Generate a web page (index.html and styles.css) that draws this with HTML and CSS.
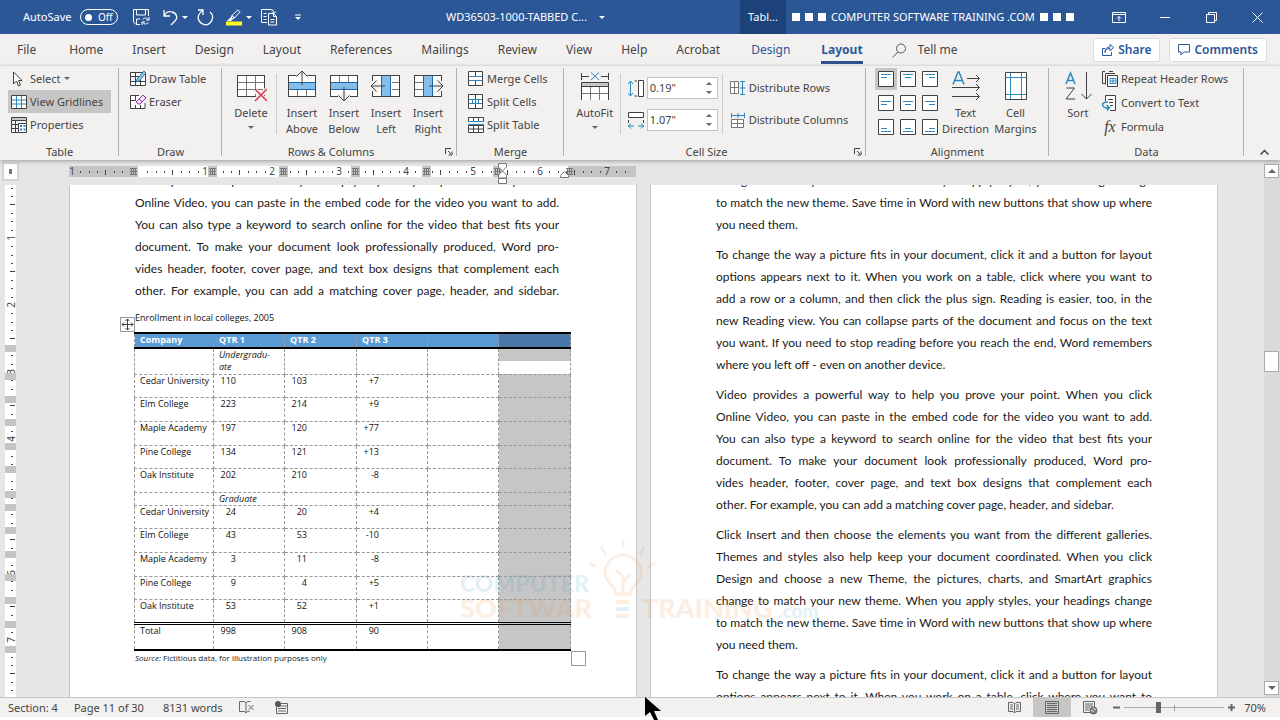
FILE: index.html
```html
<!DOCTYPE html>
<html lang="en">
<head>
<meta charset="utf-8">
<title>WD36503-1000-TABBED C...</title>
<link rel="stylesheet" href="styles.css">
</head>
<body>
<div class="app">
  <header class="titlebar">
    <div class="quick">
      <span class="autosave" id="as">AutoSave</span>
      <button class="toggle" aria-labelledby="as"><i></i>Off</button>
      <button class="qbtn save" aria-label="Save"><svg width="17" height="17" viewBox="0 0 17 17"><path d="M7 15.500H3L.5 13V.5h15V7M3.500 1v5h9V1M3.500 15v-5H7M16 8v3h-3M9 16v-3h3M9.500 10.500c1.500-2 4.500-2 6 .3M15.500 13.500c-1.500 2-4.500 2-6-.3"/></svg></button>
      <button class="qbtn undo" aria-label="Undo"><svg width="15" height="17" viewBox="0 0 15 17"><path stroke-width="1.300" d="M1 1v6h6M1 7c2-4 5-5 8-4 5 1 6 6 3 9l-4 4"/></svg><b class="caret"></b></button>
      <button class="qbtn redo" aria-label="Repeat"><svg width="17" height="17" viewBox="0 0 17 17"><path stroke-width="1.300" d="M1 1h5v5M6 1.500C1 4 0 9 2.500 12.500S10 17 13 14s4-8 0-11"/></svg></button>
      <button class="qbtn pen" aria-label="Highlight"><svg width="16" height="17" viewBox="0 0 16 17"><path d="M6 6.500 12 .8l2 2L8.500 9zM6 6.500 8.500 9 6 10l-1-1z"/><path class="wf" d="M5 8l2 2-2 2H1z"/><path class="yl" d="M0 12.500h16v4H0z"/></svg><b class="caret"></b></button>
      <button class="qbtn docs" aria-label="Compare"><svg width="17" height="17" viewBox="0 0 17 17"><path d="M6 13.500H.5V.5h9M7.500 4.500h5l3 3v8.500h-8zM12.500 4.500v3h3M2.500 4.500h3M2.500 7.500h3M2.500 10.500h3M9.500 10.500h4M9.500 13h4M9 .5c3 0 4 1 4 3.500M11 2.500l2 2 2-2"/></svg></button>
      <button class="qbtn more" aria-label="Customize"><svg width="7" height="7" viewBox="0 0 7 7"><path d="M0 1h6"/><path class="wf" d="M0 3h6L3 6z"/></svg></button>
    </div>
    <div class="doctitle">WD36503-1000-TABBED C... <b class="caret"></b></div>
    <div class="ctx">Tabl...</div>
    <div class="org"><span class="sq"><i></i><i></i><i></i></span><span>COMPUTER SOFTWARE TRAINING .COM</span><span class="sq"><i></i><i></i><i></i></span></div>
    <button class="win" aria-label="Ribbon display"><svg width="14" height="11" viewBox="0 0 14 11"><path d="M.5.5h13v10H.5zM.5 2.500h13M7 9V4.500M5 6.500l2-2 2 2"/></svg></button>
    <button class="win" aria-label="Minimize"><svg width="11" height="11" viewBox="0 0 11 11"><path d="M0 5.500h10"/></svg></button>
    <button class="win" aria-label="Restore"><svg width="11" height="11" viewBox="0 0 11 11"><path d="M.5 2.500h8v8h-8zM2.500 2.500v-2h8v8h-2"/></svg></button>
    <button class="win" aria-label="Close"><svg width="11" height="11" viewBox="0 0 11 11"><path d="M.5.5l10 10M10.500.5l-10 10"/></svg></button>
  </header>

  <nav class="tabs">
    <a href="#" class="file">File</a><a href="#">Home</a><a href="#">Insert</a><a href="#">Design</a><a href="#">Layout</a><a href="#">References</a><a href="#">Mailings</a><a href="#">Review</a><a href="#">View</a><a href="#">Help</a><a href="#">Acrobat</a><a href="#" class="blue">Design</a><a href="#" class="blue on">Layout</a>
    <button class="tell"><svg width="15" height="15" viewBox="0 0 15 15"><circle cx="9" cy="5.500" r="4.500"/><path d="M6 9 .5 14.500"/></svg>Tell me</button>
    <span class="grow"></span>
    <button class="pill"><svg width="12" height="12" viewBox="0 0 12 12"><path d="M3 4.500H.5v7h9V8M3 8.500c0-3 2-4 5-4V7l3.500-3.500L8 .5V3C4.500 3 3 5 3 8.500z"/></svg>Share</button>
    <button class="pill"><svg width="12" height="12" viewBox="0 0 12 12"><path d="M.5.5h11v7.500H6L3 11V8H.5z"/></svg>Comments</button>
  </nav>

  <section class="ribbon">
    <div class="group">
      <div class="gbody pad">
        <div class="stack">
          <button class="sm"><svg width="16" height="16" viewBox="0 0 16 16"><path class="w" d="M2.500 1v12l3-3 2 5 2-1-2-4.500H11z"/></svg>Select<b class="caret"></b></button>
          <button class="sm pressed"><svg width="16" height="16" viewBox="0 0 16 16"><path class="w" d="M.5 1.500h15v13H.5z"/><path class="b" d="M5.500 2v12M10.500 2v12M1 6h14M1 10h14"/></svg>View Gridlines</button>
          <button class="sm"><svg width="16" height="16" viewBox="0 0 16 16"><path class="g" d="M.5.5h15v3H.5z"/><path d="M.5.5h15v3H.5zM.5 3.500v12H7M15.500 3.500V6M4.500 4v11M.5 7.500H7M.5 11.500H7"/><path class="w" d="M7.500 6.500h8v9h-8z"/><path class="b" d="M9 9h2M9 12.500h2M12.500 9h2M12.500 12.500h2" stroke-width="2"/></svg>Properties</button>
        </div>
      </div>
      <div class="glabel">Table</div>
    </div>
    <div class="group">
      <div class="gbody pad">
        <div class="stack">
          <button class="sm"><svg width="16" height="16" viewBox="0 0 16 16"><path class="w" d="M.5 1.500h15v13H.5z"/><path d="M5.500 2v12M10.500 8v6M1 5.500h8M1 10.500h14"/><path class="lb" d="M14 0l2 2-7 8-3 1 1-3z"/></svg>Draw Table</button>
          <button class="sm"><svg width="16" height="16" viewBox="0 0 16 16"><path class="w" d="M15 9v5.500H.5v-13H9M5.500 2v4.500H1M5.500 11v3M10.500 11v3"/><path class="pu" d="M7 7l6-6 3 3-6 6H8L6 8zM9 5l3.500 3"/></svg>Eraser</button>
        </div>
      </div>
      <div class="glabel">Draw</div>
    </div>
    <div class="group">
      <div class="gbody mid">
        <button class="lg"><svg width="32" height="32" viewBox="0 0 32 32"><path class="w" d="M2.500 5.500h27v21h-27z"/><path class="gr" d="M11.500 6v20M20.500 6v20M3 12.500h26M3 19.500h26"/><path d="M2.500 5.500h27v21h-27z"/><path class="halo" d="M20 20l11 11M31 20L20 31"/><path class="rd" d="M20 19l12 12M32 19L20 31"/></svg><span>Delete</span><b class="caret"></b></button>
        <i class="vr"></i>
        <button class="lg"><svg width="32" height="32" viewBox="0 0 32 32"><path class="w" d="M2.500 5.500h27v21h-27z"/><path class="gr" d="M11.500 20v6M20.500 20v6"/><path class="halo" d="M16 6V1l-5 5M16 1l5 5"/><path class="sky" d="M2.500 12.500h27v7h-27z"/><path d="M2.500 5.500v21h27v-21M2.500 5.500H7M25 5.500h4.500M16 15V1M10.500 6.500L16 1l5.500 5.500"/></svg><span>Insert<br>Above</span></button>
        <button class="lg"><svg width="32" height="32" viewBox="0 0 32 32"><path class="w" d="M2.500 5.500h27v21h-27z"/><path class="gr" d="M11.500 6v6M20.500 6v6"/><path class="halo" d="M16 22v9l-6-6M16 31l6-6"/><path class="sky" d="M2.500 12.500h27v7h-27z"/><path d="M10 26.500H2.500v-21h27v21H22M16 17v14M10.500 25.500L16 31l5.500-5.500"/></svg><span>Insert<br>Below</span></button>
        <button class="lg"><svg width="32" height="32" viewBox="0 0 32 32"><path class="w" d="M2.500 5.500h27v21h-27z"/><path class="gr" d="M22 12.500h7M22 19.500h7"/><path class="halo" d="M10 16H1l6-6M1 16l6 6"/><path class="sky" d="M11.500 5.500h9v21h-9z"/><path d="M2.500 10V5.500h27v21h-27V22M15 16H1M6.500 10.500L1 16l5.500 5.500"/></svg><span>Insert<br>Left</span></button>
        <button class="lg"><svg width="32" height="32" viewBox="0 0 32 32"><path class="w" d="M2.500 5.500h27v21h-27z"/><path class="gr" d="M3 12.500h8M3 19.500h8"/><path class="halo" d="M22 16h9l-6-6M31 16l-6 6"/><path class="sky" d="M11.500 5.500h9v21h-9z"/><path d="M29.500 10V5.500h-27v21h27V22M17 16h14M25.500 10.500L31 16l-5.500 5.500"/></svg><span>Insert<br>Right</span></button>
      </div>
      <div class="glabel withlaunch">Rows &amp; Columns</div>
      <button class="launch" aria-label="Table options"><svg width="8" height="8" viewBox="0 0 8 8"><path d="M.5 6V.5H6M3 3l3 3M7 3.500V7H3.500"/></svg></button>
    </div>
    <div class="group">
      <div class="gbody pad">
        <div class="stack">
          <button class="sm"><svg width="16" height="16" viewBox="0 0 16 16"><path class="w" d="M.5.5h14v14H.5z"/><path d="M7.500 1v4M7.500 10v4"/><path class="b" d="M1 5.500h13M1 9.500h13"/></svg>Merge Cells</button>
          <button class="sm"><svg width="16" height="16" viewBox="0 0 16 16"><path class="w" d="M.5.5h14v14H.5z"/><path d="M7.500 1v4M7.500 10v4"/><path class="b" d="M1 5.500h13M1 9.500h13M4.500 5v5M7.500 5v5M10.500 5v5"/></svg>Split Cells</button>
          <button class="sm"><svg width="16" height="16" viewBox="0 0 16 16"><path class="w" d="M.5 4V.5h15V4M5.500 1v3M10.500 1v3M.5 8.500h15v7H.5zM5.500 9v6M10.500 9v6M1 12h14"/><path class="b" d="M0 4.500h16M0 7.500h16"/></svg>Split Table</button>
        </div>
      </div>
      <div class="glabel">Merge</div>
    </div>
    <div class="group">
      <div class="gbody mid shift">
        <button class="lg"><svg width="32" height="32" viewBox="0 0 32 32"><path d="M2.500 3v7M29.500 3v7M3 6.500h7M22 6.500h7"/><path class="b" d="M12 2.500l8 7.500M20 2.500L12 10"/><path class="wn" d="M2.500 12.500h27V30h-27z"/><path class="g" d="M3 13h26v3H3z"/><path d="M2.500 30V12.500h27V30M3 16.500h26"/><path class="gr" d="M11.500 17v13M20.500 17v13M3 23.500h26"/></svg><span>AutoFit</span><b class="caret"></b></button>
        <i class="vr"></i>
        <div class="sizes">
          <div class="size"><svg width="16" height="17" viewBox="0 0 16 17"><path class="b" d="M2.500 1v15M0 4l2.500-3L5 4M0 13l2.500 3L5 13"/><path d="M6.500 1H9M6.500 16H9"/><path class="w" d="M10.500.5h5v16h-5z"/></svg><span class="spin"><input type="text" value="0.19&quot;" aria-label="Height"><span><button aria-label="Height up"></button><button class="dn" aria-label="Height down"></button></span></span></div>
          <div class="size"><svg width="16" height="17" viewBox="0 0 16 17"><path class="w" d="M.5.5h15v5H.5z"/><path d="M.5 8v3M15.500 8v3"/><path class="b" d="M0 14h6M10 14h6M3 11.500L.5 14 3 16.500M13 11.500l2.500 2.500-2.500 2.500"/></svg><span class="spin"><input type="text" value="1.07&quot;" aria-label="Width"><span><button aria-label="Width up"></button><button class="dn" aria-label="Width down"></button></span></span></div>
        </div>
        <i class="vr"></i>
        <div class="sizes">
          <button class="sm"><svg width="16" height="16" viewBox="0 0 16 16"><path class="w gr" d="M.5 1.500h8v12h-8zM1 7.500h7M4.500 2v11"/><path class="b" d="M12.500 1v14M10 1.500h5M10 8h5M10 14.500h5"/></svg>Distribute Rows</button>
          <button class="sm"><svg width="16" height="16" viewBox="0 0 16 16"><path class="b" d="M1 3.500h14M1.500 1v5M8 1v5M14.500 1v5"/><path class="w gr" d="M1.500 7.500h12v8h-12zM7.500 8v7M2 11.500h11"/></svg>Distribute Columns</button>
        </div>
      </div>
      <div class="glabel withlaunch">Cell Size</div>
      <button class="launch" aria-label="Cell size options"><svg width="8" height="8" viewBox="0 0 8 8"><path d="M.5 6V.5H6M3 3l3 3M7 3.500V7H3.500"/></svg></button>
    </div>
    <div class="group">
      <div class="gbody mid">
        <div class="aligns">
          <button class="pressed" aria-label="Top left"><svg width="16" height="16" viewBox="0 0 16 16"><path class="w" d="M.5.5h15v15H.5z"/><path class="b" d="M3 3.500h10M3 6.500h6"/></svg></button>
          <button aria-label="Top center"><svg width="16" height="16" viewBox="0 0 16 16"><path class="w" d="M.5.5h15v15H.5z"/><path class="b" d="M3 3.500h10M5 6.500h6"/></svg></button>
          <button aria-label="Top right"><svg width="16" height="16" viewBox="0 0 16 16"><path class="w" d="M.5.5h15v15H.5z"/><path class="b" d="M3 3.500h10M7 6.500h6"/></svg></button>
          <button aria-label="Middle left"><svg width="16" height="16" viewBox="0 0 16 16"><path class="w" d="M.5.5h15v15H.5z"/><path class="b" d="M3 6.500h10M3 9.500h6"/></svg></button>
          <button aria-label="Middle center"><svg width="16" height="16" viewBox="0 0 16 16"><path class="w" d="M.5.5h15v15H.5z"/><path class="b" d="M3 6.500h10M5 9.500h6"/></svg></button>
          <button aria-label="Middle right"><svg width="16" height="16" viewBox="0 0 16 16"><path class="w" d="M.5.5h15v15H.5z"/><path class="b" d="M3 6.500h10M7 9.500h6"/></svg></button>
          <button aria-label="Bottom left"><svg width="16" height="16" viewBox="0 0 16 16"><path class="w" d="M.5.5h15v15H.5z"/><path class="b" d="M3 9.500h6M3 12.500h10"/></svg></button>
          <button aria-label="Bottom center"><svg width="16" height="16" viewBox="0 0 16 16"><path class="w" d="M.5.5h15v15H.5z"/><path class="b" d="M5 9.500h6M3 12.500h10"/></svg></button>
          <button aria-label="Bottom right"><svg width="16" height="16" viewBox="0 0 16 16"><path class="w" d="M.5.5h15v15H.5z"/><path class="b" d="M7 9.500h6M3 12.500h10"/></svg></button>
        </div>
        <button class="lg wide"><svg width="32" height="32" viewBox="0 0 32 32"><path class="b" stroke-width="1.500" d="M3 14.500L8 2h1l5 12.500M4.500 10.500h8"/><path d="M17 8.500h12M26 5l3.500 3.500L26 12M2 17.500h27M26 14l3.500 3.500L26 21M2 26.500h27M26 23l3.500 3.500L26 30"/></svg><span>Text<br>Direction</span></button>
        <button class="lg wide"><svg width="32" height="32" viewBox="0 0 32 32"><path class="w" d="M5.500 2.500h21v27h-21z"/><path class="b" d="M10.500 3v26M21.500 3v26M6 7.500h20M6 24.500h20"/></svg><span>Cell<br>Margins</span></button>
      </div>
      <div class="glabel">Alignment</div>
    </div>
    <div class="group">
      <div class="gbody mid shift">
        <button class="lg"><svg width="32" height="32" viewBox="0 0 32 32"><path class="b" stroke-width="1.500" d="M4 14L8.500 3 13 14M5.500 10.500h6"/><path d="M4.500 18h8L4 29h9M24.500 2v27M19.500 24l5 5 5-5"/></svg><span>Sort</span></button>
        <div class="stack tall">
          <button class="sm"><svg width="16" height="16" viewBox="0 0 16 16"><path d="M3 .5H.5v12H3M7 .5h4M4 2.500h9M3.500 2.500v11"/><path class="w" d="M5.500 4.500h10v11h-10z"/><path class="b" d="M8 7.500h6v5H8zM11 7.500v5M8 10h6"/></svg>Repeat Header Rows</button>
          <button class="sm"><svg width="16" height="16" viewBox="0 0 16 16"><path class="w" d="M3.500 6V.5h10v15H8"/><path d="M6 4.500h5M7 7.500h4M8 10.500h3"/><path class="b" stroke-width="1.500" d="M6 7C1 7 0 9 1 11s3 2.500 6 1.500M4.500 10L7.500 12.500 5 15.500"/></svg>Convert to Text</button>
          <button class="sm"><em class="fx">fx</em>Formula</button>
        </div>
      </div>
      <div class="glabel">Data</div>
    </div>
    <div class="group last"><button class="launch" aria-label="Collapse the ribbon"><svg width="9" height="6" viewBox="0 0 9 6"><path d="M.5 5.500l4-4 4 4" stroke-width="1.500"/></svg></button></div>
  </section>

  <main class="work">
    <aside class="vside">
      <span class="corner"><i></i></span>
      <svg class="vruler" width="11" height="512" viewBox="0 0 11 512">
        <defs><pattern id="vt" width="11" height="67" y="53" patternUnits="userSpaceOnUse"><path d="M6 8.500h2M6 17.500h2M6 25.500h2M5 33.500h5M6 42.500h2M6 50.500h2M6 59.500h2" stroke="#444"/></pattern></defs>
        <path fill="#fff" d="M0 0h11v512H0z"/><path fill="url(#vt)" d="M0 0h11v512H0z"/>
        <g class="rnum" transform="rotate(-90)"><text x="-53" y="10">1</text><text x="-120" y="10">2</text><text x="-187" y="10">3</text><text x="-254" y="10">4</text><text x="-388" y="10">6</text><text x="-455" y="10">7</text></g>
        <path fill="#c4c4c4" d="M0 160h11v7H0zM0 188h11v7H0zM0 211h11v7H0zM0 234h11v7H0zM0 258h11v7H0zM0 281h11v7H0zM0 306h11v7H0zM0 319h11v7H0zM0 342h11v7H0zM0 366h11v7H0zM0 389h11v7H0zM0 412h11v7H0zM0 436h11v7H0zM0 461h11v7H0z"/>
      </svg>
    </aside>

    <div class="canvas">
      <div class="hrule">
        <svg width="568" height="22" viewBox="0 0 568 22">
          <defs><pattern id="ht" width="67" height="11" x="3" y="3" patternUnits="userSpaceOnUse"><path d="M8.500 5v2M17.500 5v2M25.500 5v2M33.500 4v5M42.500 5v2M50.500 5v2M59.500 5v2" stroke="#444"/></pattern></defs>
          <path fill="#c4c4c4" d="M-1 3h568v11H-1z"/><path fill="#fff" d="M68 3h431v11H68z"/>
          <path fill="url(#ht)" d="M8 3h552v11H8z"/>
          <g class="rnum"><text x="3" y="12">1</text><text x="136" y="12">1</text><text x="203" y="12">2</text><text x="270" y="12">3</text><text x="337" y="12">4</text><text x="404" y="12">5</text><text x="471" y="12">6</text><text x="538" y="12">7</text></g>
          <path fill="#c4c4c4" d="M60 3h9v11h-9zM139 3h9v11h-9zM210 3h9v11h-9zM282 3h9v11h-9zM353 3h9v11h-9zM424 3h9v11h-9z"/>
          <path class="mk" d="M61 5.500h7M61 8.500h7M61 11.500h7M62.500 5v7M64.500 5v7M66.500 5v7M140 5.500h7M140 8.500h7M140 11.500h7M141.500 5v7M143.500 5v7M145.500 5v7M211 5.500h7M211 8.500h7M211 11.500h7M212.500 5v7M214.500 5v7M216.500 5v7M283 5.500h7M283 8.500h7M283 11.500h7M284.500 5v7M286.500 5v7M288.500 5v7M354 5.500h7M354 8.500h7M354 11.500h7M355.500 5v7M357.500 5v7M359.500 5v7M425 5.500h7M425 8.500h7M425 11.500h7M426.500 5v7M428.500 5v7M430.500 5v7M497 5.500h7M497 8.500h7M497 11.500h7M498.500 5v7M500.500 5v7M502.500 5v7"/>
          <path class="ind" d="M429.500.5h8V4l-4 4-4-4zM433.500 8l4 4v3h-8v-3zM429.500 15.500h8v5h-8zM491.500 14.500v-2l4-4 4 4v2z"/>
        </svg>
      </div>
      <div class="pages">
        <article class="page">
          <div class="body just left">
            <p><span>Video provides a powerful way to help you prove your point. When you click</span><span>Online Video, you can paste in the embed code for the video you want to add.</span><span>You can also type a keyword to search online for the video that best fits your</span><span>document. To make your document look professionally produced, Word pro-</span><span>vides header, footer, cover page, and text box designs that complement each</span><span class="full">other. For example, you can add a matching cover page, header, and sidebar.</span></p>
            <div class="tablewrap">
            <button class="mover" aria-label="Move table"><svg width="13" height="13" viewBox="0 0 13 13"><path d="M6.500 1v11M1 6.500h11M4.500 3l2-2 2 2M4.500 10l2 2 2-2M3 4.500l-2 2 2 2M10 4.500l2 2-2 2"/></svg></button>
            <table>
              <caption>Enrollment in local colleges, 2005</caption>
              <colgroup><col class="c1"><col class="c2"><col class="c3"><col class="c2"><col class="c2"><col class="c3"></colgroup>
              <thead><tr><th>Company</th><th>QTR 1</th><th>QTR 2</th><th>QTR 3</th><th></th><th class="sel"></th></tr></thead>
              <tbody>
              <tr class="under"><td></td><td><em>Undergradu-<br>ate</em></td><td></td><td></td><td></td><td class="half"></td></tr>
              <tr><td>Cedar University</td><td><b>110</b></td><td><b>103</b></td><td><b>+7</b></td><td></td><td class="sel"></td></tr>
              <tr class="t"><td>Elm College</td><td><b>223</b></td><td><b>214</b></td><td><b>+9</b></td><td></td><td class="sel"></td></tr>
              <tr class="t"><td>Maple Academy</td><td><b>197</b></td><td><b>120</b></td><td><b>+77</b></td><td></td><td class="sel"></td></tr>
              <tr><td>Pine College</td><td><b>134</b></td><td><b>121</b></td><td><b>+13</b></td><td></td><td class="sel"></td></tr>
              <tr class="t"><td>Oak Institute</td><td><b>202</b></td><td><b>210</b></td><td><b>-8</b></td><td></td><td class="sel"></td></tr>
              <tr class="grad"><td></td><td><em>Graduate</em></td><td></td><td></td><td></td><td class="sel"></td></tr>
              <tr><td>Cedar University</td><td><b>24</b></td><td><b>20</b></td><td><b>+4</b></td><td></td><td class="sel"></td></tr>
              <tr class="t"><td>Elm College</td><td><b>43</b></td><td><b>53</b></td><td><b>-10</b></td><td></td><td class="sel"></td></tr>
              <tr class="t"><td>Maple Academy</td><td><b>3</b></td><td><b>11</b></td><td><b>-8</b></td><td></td><td class="sel"></td></tr>
              <tr><td>Pine College</td><td><b>9</b></td><td><b>4</b></td><td><b>+5</b></td><td></td><td class="sel"></td></tr>
              <tr class="t"><td>Oak Institute</td><td><b>53</b></td><td><b>52</b></td><td><b>+1</b></td><td></td><td class="sel"></td></tr>
              </tbody>
              <tfoot><tr><td>Total</td><td><b>998</b></td><td><b>908</b></td><td><b>90</b></td><td></td><td class="sel"></td></tr></tfoot>
            </table>
            <i class="sizer"></i>
            </div>
            <div class="source"><em>Source:</em> Fictitious data, for illustration purposes only</div>
            <p><span class="full">Click Insert and then choose the elements you want from the different galleries.</span></p>
          </div>
        </article>
        <article class="page">
          <div class="body just">
            <p><span>change to match your new theme. When you apply styles, your headings change</span><span>to match the new theme. Save time in Word with new buttons that show up where</span><span>you need them.</span></p>
            <p><span>To change the way a picture fits in your document, click it and a button for layout</span><span>options appears next to it. When you work on a table, click where you want to</span><span>add a row or a column, and then click the plus sign. Reading is easier, too, in the</span><span>new Reading view. You can collapse parts of the document and focus on the text</span><span>you want. If you need to stop reading before you reach the end, Word remembers</span><span>where you left off - even on another device.</span></p>
            <p><span>Video provides a powerful way to help you prove your point. When you click</span><span>Online Video, you can paste in the embed code for the video you want to add.</span><span>You can also type a keyword to search online for the video that best fits your</span><span>document. To make your document look professionally produced, Word pro-</span><span>vides header, footer, cover page, and text box designs that complement each</span><span>other. For example, you can add a matching cover page, header, and sidebar.</span></p>
            <p><span>Click Insert and then choose the elements you want from the different galleries.</span><span>Themes and styles also help keep your document coordinated. When you click</span><span>Design and choose a new Theme, the pictures, charts, and SmartArt graphics</span><span>change to match your new theme. When you apply styles, your headings change</span><span>to match the new theme. Save time in Word with new buttons that show up where</span><span>you need them.</span></p>
            <p><span>To change the way a picture fits in your document, click it and a button for layout</span><span class="full">options appears next to it. When you work on a table, click where you want to</span></p>
          </div>
        </article>
        <svg class="mark" width="366" height="90" viewBox="0 0 366 90">
          <text class="m1" x="0" y="53">COMPUTER</text>
          <text class="m2" x="0" y="79">SOFTWAR</text>
          <path class="m4" d="M156 61h13v4h-13zM156 75h13v4h-13z"/><path class="m3" d="M156 68h13v4h-13z"/>
          <text class="m2" x="182" y="79">TRAINING</text>
          <text class="m1 com" x="318" y="79">.com</text>
          <path class="bulb" d="M156 55c0-8-11-11-11-21a18 18 0 0 1 36 0c0 10-11 13-11 21zM163 55V38l-7-7M163 44l7-9M163 8v-7M146 16l-5-8M180 16l4-8M136 28l-7-4M188 28l7-4"/>
        </svg>
      </div>
    </div>

    <aside class="scroll">
      <button aria-label="Scroll up"><i class="up"></i></button>
      <span class="s1"></span><i class="thumb"></i><span class="s2"></span>
      <button aria-label="Scroll down"><i class="down"></i></button>
    </aside>
  </main>

  <footer class="status">
    <span>Section: 4</span><span>Page 11 of 30</span><span class="words">8131 words</span>
    <button aria-label="Proofing"><svg width="15" height="13" viewBox="0 0 15 13"><path d="M7 12L5.500 10.500H.5v-10h5L7 2l1.500-1.500h3M7 2v10l1.500-1.500h2M9.500 4l5 5M14.500 4l-5 5"/></svg></button>
    <button class="macro" aria-label="Macro"><svg width="14" height="13" viewBox="0 0 14 13"><path d="M1.500 6v6.500h11v-10H6M1 5h12M3 7.500h8M3 10h8"/><circle cx="3" cy="3" r="3" fill="#555" stroke="none"/></svg></button>
    <span class="grow"></span>
    <button class="view" aria-label="Read mode"><svg width="13" height="13" viewBox="0 0 13 13"><path d="M6.500 12L5 10.500H.5v-9H5L6.500 3 8 1.500h4.500v9H8zM6.500 3v9M2 4h3M2 6h3M2 8h3M8 4h3M8 6h3M8 8h3"/></svg></button>
    <button class="view cur" aria-label="Print layout"><svg width="14" height="13" viewBox="0 0 14 13"><path d="M.5.5h13v12H.5zM2 2.500h10M2 4.500h10M2 6.500h10M2 8.500h10M2 10.500h10"/></svg></button>
    <button class="view" aria-label="Web layout"><svg width="15" height="14" viewBox="0 0 15 14"><path d="M7 11.500H.5V.5h11V6M2 3h8M2 5h8M2 7h5M2 9h4"/><circle cx="10.500" cy="9.500" r="3.500" fill="#777"/><path d="M8 9l3 2M10 7l3 2" stroke="#eee"/></svg></button>
    <button class="pm" aria-label="Zoom out"><svg width="7" height="7" viewBox="0 0 7 7"><path d="M0 3.500h7" stroke-width="2"/></svg></button>
    <input class="zoom" type="range" min="0" max="100" value="33" aria-label="Zoom">
    <button class="pm" aria-label="Zoom in"><svg width="7" height="7" viewBox="0 0 7 7"><path d="M0 3.500h7M3.500 0v7" stroke-width="2"/></svg></button>
    <span class="pct">70%</span>
  </footer>
  <svg class="cursor" width="17" height="23" viewBox="0 0 17 23"><path d="M0 0v19l5-4 4 8h4l-4-9h7z"/></svg>
</div>
</body>
</html>
```
FILE: styles.css
```css
* { box-sizing: border-box; }
body { margin: 0; font: 11px/16px "Noto Sans", "Open Sans", sans-serif; color: #444; }
button { border: 0; padding: 0; margin: 0; background: none; font: inherit; color: inherit; display: flex; align-items: center; }
svg { display: block; fill: none; stroke: #404040; stroke-width: 1; flex: none; }
svg text { stroke: none; }
a { color: inherit; text-decoration: none; }
.grow { flex: 1; }
.caret { display: inline-block; width: 0; height: 0; border: 3px solid transparent; border-top-color: currentColor; border-bottom-width: 0; opacity: .8; }
.app { position: relative; height: 100vh; display: flex; flex-direction: column; overflow: hidden; background: #e6e6e6; }

/* title bar */
.titlebar { display: grid; grid-template-columns: 446fr 294fr 46fr 310fr 46fr 46fr 46fr 46fr; height: 34px; flex: none; background: #2c5797; color: #fff; white-space: nowrap; }
.titlebar > * { display: flex; align-items: center; min-width: 0; }
.titlebar .caret { opacity: 1; }
.titlebar svg { stroke: #fff; }
.titlebar .wf { fill: #fff; stroke: none; }
.titlebar .yl { fill: #ffff1e; stroke: none; }
.quick { padding-left: 23px; }
.autosave { width: 57px; }
.toggle { width: 38px; height: 16px; border: 1px solid #fff; border-radius: 8px; padding-left: 4px; gap: 6px; font-size: 10px; margin-right: 15px; }
.toggle i { width: 7px; height: 7px; border-radius: 50%; background: #fff; }
.qbtn { gap: 4px; }
.undo { margin-left: 13px; }
.redo { margin-left: 9px; }
.pen { margin-left: 12px; }
.docs { margin-left: 9px; }
.more { margin-left: 17px; }
.doctitle { gap: 12px; }
.ctx { background: #1d427a; justify-content: center; }
.org { gap: 5px; padding-left: 6px; }
.sq { display: flex; gap: 5px; }
.sq i { width: 8px; height: 8px; background: #fff; }
.win { justify-content: center; }

/* tabs */
.tabs { display: flex; align-items: center; gap: 29px; height: 32px; flex: none; padding: 0 13px 0 17px; background: #f2f1ef; font-size: 12px; white-space: nowrap; }
.tabs a { height: 27px; line-height: 26px; border-bottom: 3px solid transparent; }
.tabs .file { margin-right: 4px; }
.tabs .blue { color: #2b579a; margin-left: 2px; }
.tabs .on { font-weight: 700; border-color: #2b4f8c; }
.tell { gap: 11px; }
.tabs svg { stroke: #555; }
.pill { height: 24px; padding: 0 8px; gap: 4px; background: #fff; border: 1px solid #dcdcdc; border-radius: 2px; color: #2b579a; font-weight: 600; }
.pill + .pill { margin-left: -20px; }
.tabs .pill svg { stroke: #2b579a; }

/* ribbon */
.ribbon { display: grid; grid-template-columns: 119fr 103fr 235fr 107fr 302fr 183fr 195fr 36fr; height: 94px; flex: none; background: #f2f1ef; box-shadow: 0 1px 4px #999; position: relative; z-index: 1; white-space: nowrap; }
.group { position: relative; display: flex; flex-direction: column; padding-top: 1px; min-width: 0; background: linear-gradient(#b4b2b0, #b4b2b0) right 2px / 1px 88px no-repeat; }
.group.last { background: none; }
.gbody { flex: 1; display: flex; min-height: 0; }
.pad { padding: 0 8px; }
.mid { justify-content: center; }
.shift { padding-right: 5px; }
.glabel { text-align: center; height: 16px; line-height: 16px; }
.withlaunch { padding-right: 17px; }
.stack { display: flex; flex-direction: column; }
.stack .sm { height: 23px; }
.stack.tall .sm { height: 24px; }
.sm { gap: 3px; padding: 0 3px; }
.pressed { background: #c8c6c4; }
.sm.pressed { padding-right: 8px; }
.w { fill: #fff; }
.wn { fill: #fff; stroke: none; }
.g { fill: #c6c6c6; stroke: none; }
.b { stroke: #2b88c0; }
.gr { stroke: #777; }
.rd { stroke: #d9364f; stroke-width: 1.500; }
.lb { fill: #8cc4ea; stroke: #2b78b0; }
.pu { fill: #f2e3f7; stroke: #9b30b5; }
.sky { fill: #83beec; stroke: #1b66a8; }
.halo { stroke: #f2f1ef; stroke-width: 5; }
.lg { flex-direction: column; width: 42px; padding-top: 3px; line-height: 16px; text-align: center; }
.lg svg { margin-bottom: 3px; }
.lg .caret { margin-top: 5px; }
.lg.wide { width: 50px; }
.vr { width: 1px; height: 60px; background: #d0cecc; margin: 7px 4px 0; }
.sizes { display: flex; flex-direction: column; gap: 10px; padding-top: 10px; }
.sizes .sm { height: 22px; }
.size { display: flex; align-items: center; gap: 3px; padding-left: 3px; }
.spin { display: flex; width: 71px; height: 22px; border: 1px solid #c4c2c0; background: #fff; }
.spin input { flex: 1; min-width: 0; border: 0; padding: 0 2px; font: inherit; color: inherit; background: none; }
.spin > span { display: flex; flex-direction: column; justify-content: center; gap: 6px; padding-right: 5px; }
.spin button { width: 0; height: 0; border: 3px solid transparent; border-bottom-color: #666; border-top-width: 0; }
.spin .dn { border-top: 3px solid #666; border-bottom: 0; }
.aligns { display: grid; grid-template-columns: repeat(3, 22px); grid-auto-rows: 24px; padding-top: 1px; }
.aligns button { justify-content: center; height: 22px; }
.fx { width: 16px; font: italic 16px/16px "Liberation Serif", serif; }
.launch { position: absolute; right: 4px; bottom: 4px; }
.last .launch { right: 11px; bottom: 5px; }

/* work area */
.work { flex: 1; display: flex; min-height: 0; }
.vside { width: 23px; padding: 4px 0 0 5px; }
.corner { display: flex; align-items: center; justify-content: center; width: 13px; height: 15px; background: #fff; outline: 2px solid #d4d4d4; margin: 0 0 6px -1px; }
.corner i { width: 3px; height: 5px; background: #777; }
.vruler, .hrule svg { stroke: none; }
.rnum text { font: 10px "Noto Sans", sans-serif; fill: #444; text-anchor: middle; }
.mk { stroke: #777; }
.ind { fill: #fff; stroke: #777; }
.canvas { flex: 1; min-width: 0; display: flex; flex-direction: column; }
.hrule, .pages { display: grid; grid-template-columns: 568px 568px; gap: 13px; justify-content: center; }
.hrule { height: 25px; padding-top: 3px; flex: none; }
.pages { flex: 1; min-height: 0; position: relative; }
.page { background: #fff; border: solid #c6c6c6; border-width: 0 1px; padding: 0 65px; overflow: hidden; min-height: 0; }
.body { margin-top: -15px; color: #1a1a1a; font: 12px/22px Lato, sans-serif; white-space: nowrap; }
.body p { margin: 0 0 8px; }
.body p span { display: block; height: 22px; }
.just p span { text-align: justify; text-align-last: justify; }
.just p span:last-child { text-align-last: left; }
.just p .full:last-child { text-align-last: justify; }
.left p { padding-right: 12px; }

.tablewrap { position: relative; margin: -1px 0 0 -1px; }
.mover { position: absolute; left: -14px; top: 8px; width: 15px; height: 15px; border: 1px solid #999; background: #fff; }
.sizer { position: absolute; right: -15px; bottom: -15px; width: 15px; height: 15px; border: 1px solid #999; background: #fff; }
table { width: 100%; table-layout: fixed; border-collapse: collapse; font: 9px/12px "Open Sans", sans-serif; color: #111; }
caption { text-align: left; height: 23px; line-height: 18px; padding-left: 1px; }
.c1 { width: 79px; }
.c2 { width: 71px; }
.c3 { width: 72px; }
th, td { border: 1px dashed #999; padding: 0 0 0 5px; text-align: left; vertical-align: top; }
th { height: 15px; background: #5b9bd5; color: #fff; border-top: 2px solid #000; border-bottom: 2px solid #000; }
th.sel { background: #4a78a8; }
td { height: 23px; }
.t td { height: 24px; }
.under td { height: 26px; }
.grad td { height: 13px; }
td b { display: block; width: 17px; text-align: right; font-weight: 400; }
.sel { background: #c6c6c6; }
.half { background: linear-gradient(#c6c6c6 50%, #fff 50%); }
tfoot td { height: 27px; border-top: 3px double #000; border-bottom: 2px solid #000; }
.source { font: 8px/14px "Open Sans", sans-serif; height: 40px; }

/* watermark */
.mark { position: absolute; left: 437px; top: 354px; opacity: .14; }
.mark text { font: 900 27px Lato, sans-serif; }
.mark .m1 { fill: #3aa0b0; font-size: 23px; }
.mark .m2 { fill: #f08a3c; }
.mark .com { font-size: 19px; }
.m3 { fill: #3aa0b0; stroke: none; }
.m4 { fill: #f08a3c; stroke: none; }
.bulb { stroke: #f08a3c; stroke-width: 3; }

.scroll { width: 16px; padding: 4px 1px 2px 0; display: flex; flex-direction: column; background: #dadada; }
.scroll button { height: 14px; background: #fff; border: 1px solid #aaa; justify-content: center; flex: none; }
.up, .down { width: 0; height: 0; border: 4px solid transparent; border-bottom-color: #666; border-top-width: 0; }
.down { border-top: 4px solid #666; border-bottom: 0; }
.thumb { height: 21px; background: #fff; border: 1px solid #aaa; }
.s1 { flex: 173; }
.s2 { flex: 309; }

/* status bar */
.status { display: flex; align-items: center; height: 23px; flex: none; padding: 0 14px 0 8px; gap: 16px; background: #f2f1ef; border-top: 1px solid #c6c6c6; border-bottom: 3px solid #fff; white-space: nowrap; }
.status svg { stroke: #666; }
.words { margin-left: 3px; }
.macro { margin-left: 5px; }
.view { width: 38px; height: 19px; justify-content: center; margin-left: -16px; }
.cur { background: #c8c6c4; }
.pm { margin-right: -12px; }
.pm:last-of-type { margin-right: -9px; }
.view + .pm { margin-left: -12px; }
.zoom { appearance: none; width: 100px; height: 14px; margin: 0 -12px 0 0; background: linear-gradient(#999, #999) 50% 50% / 1px 6px no-repeat, linear-gradient(#aaa, #aaa) 0 50% / 100% 1px no-repeat; }
.zoom::-webkit-slider-thumb { appearance: none; width: 5px; height: 11px; background: #666; }
.pct { margin-left: 2px; }
.cursor { position: absolute; left: 645px; bottom: 0; fill: #000; stroke: none; }
```
